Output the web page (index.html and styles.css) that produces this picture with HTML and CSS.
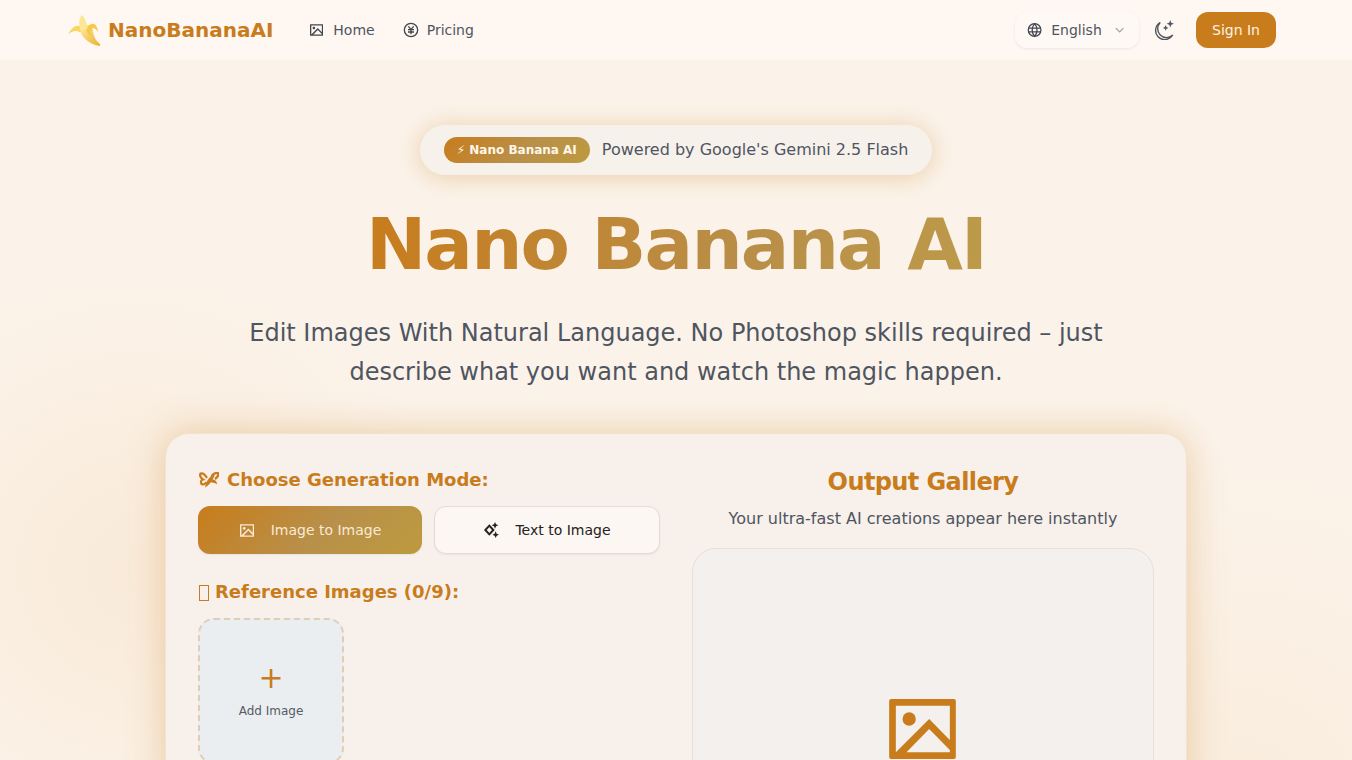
FILE: index.html
```html
<!DOCTYPE html>
<html lang="en">
<head>
    <meta charset="UTF-8">
    <meta name="viewport" content="width=device-width, initial-scale=1.0">
    <title>Nano Banana AI</title>
    <link rel="stylesheet" href="styles.css">
</head>
<body>
    <nav class="navbar">
        <div class="nav-left">
            <a class="logo" href="#">
                <svg class="logo-icon" viewBox="0 0 33 31">
                    <defs>
                        <linearGradient id="bananaBody" x1="0" y1="0" x2="1" y2="1">
                            <stop offset="0" stop-color="#fdeea6"/>
                            <stop offset="1" stop-color="#ecb02c"/>
                        </linearGradient>
                    </defs>
                    <path fill="#f9d65f" d="M13 12C9 9 4 12 0 19.500 4 16 8 14.500 13 17.500z"/>
                    <path fill="url(#bananaBody)" d="M12 13C12 21 20 29 31.500 31 33 30.500 32 29 31 28 26 24 25 18 24.500 12 21 9 15 9 12 13z"/>
                    <path fill="#fbe79a" d="M14 0C11 3 10.500 8 12 13 14 16 17 15 19 13 19 8 17 3 14 0z"/>
                    <path fill="#f6c94a" d="M18.500 15C20 10 23 8 26 9 28.500 10 29.500 13 30 17 28 14 26 12.500 24.500 13 23 14 22.500 17 23 21 20.500 20 19 18 18.500 15z"/>
                </svg>
                <span class="logo-text">NanoBananaAI</span>
            </a>
            <div class="nav-links">
                <a href="#">
                    <svg class="home-icon" viewBox="0 0 66.670 60"><path fill-rule="evenodd" d="M2 0h62.670a2 2 0 0 1 2 2v56a2 2 0 0 1-2 2H2a2 2 0 0 1-2-2V2a2 2 0 0 1 2-2zM6.670 6.670v46.660L40 20l20.670 21V6.670zM17.300 53.330h43.370V51L40 30z"/><circle cx="20" cy="20" r="6.670"/></svg>
                    Home
                </a>
                <a href="#">
                    <svg class="nav-icon price-icon" viewBox="0 0 24 24"><circle cx="12" cy="12" r="10"/><path d="M8 6.500l4 4.500 4-4.500"/><path d="M7.500 11.500h9M7.500 15h9M12 11v7.500"/></svg>
                    Pricing
                </a>
            </div>
        </div>
        <div class="nav-right">
            <button class="lang-select">
                <svg class="nav-icon" viewBox="0 0 24 24"><circle cx="12" cy="12" r="10"/><path d="M2 9h20M2 15h20"/><path d="M12 2a15 15 0 0 1 0 20a15 15 0 0 1 0-20"/></svg>
                <span>English</span>
                <svg class="chevron" viewBox="0 0 24 24"><path d="M6 9l6 6 6-6"/></svg>
            </button>
            <button class="theme-btn">
                <svg viewBox="0 0 24 24">
                    <path d="M22.500 18A11 11 0 1 1 7.500 3a10 10 0 0 0 15 15z"/>
                    <path class="spark" d="M19.500 0l1.200 3.300 3.300 1.200-3.300 1.200-1.200 3.300-1.200-3.300-3.300-1.200 3.300-1.200z"/>
                    <path class="spark" d="M14 6l1 2.500 2.500 1-2.500 1-1 2.500-1-2.500-2.500-1 2.500-1z"/>
                </svg>
            </button>
            <button class="signin-btn">Sign In</button>
        </div>
    </nav>

    <main class="hero">
        <div class="pill">
            <span class="pill-badge">⚡ Nano Banana AI</span>
            <span class="pill-text">Powered by Google's Gemini 2.5 Flash</span>
        </div>
        <h1 class="hero-title">Nano Banana AI</h1>
        <p class="hero-sub">Edit Images With Natural Language. No Photoshop skills required – just describe what you want and watch the magic happen.</p>

        <section class="card">
            <div class="card-left">
                <h3 class="section-label">
                    <svg class="label-icon" viewBox="0 0 20 16">
                        <path class="wing" d="M8 6C6 2.500 3.500 1 1.500 1.500 0.500 3 1.500 6 4 7.500 2 8 1.500 10 2.500 12 4.500 13 6.500 11.500 7.500 10"/>
                        <path class="wing" d="M12.500 4C14.500 1.500 17 0.500 19 1 19.500 3 18.500 5.500 16 7"/>
                        <path d="M15.500 2.500C11 4 7.500 8 6 15.500 9 13.500 10.500 12.500 11.500 10.500 14.500 10.500 16.500 11 18 12.500 18 9 16 7.500 13.500 7.500 14.500 6 15.500 4.500 15.500 2.500z"/>
                    </svg>Choose Generation Mode:
                </h3>
                <div class="mode-row">
                    <button class="mode-btn active">
                        <svg class="small-img" viewBox="0 0 66.670 60"><path fill-rule="evenodd" d="M2 0h62.670a2 2 0 0 1 2 2v56a2 2 0 0 1-2 2H2a2 2 0 0 1-2-2V2a2 2 0 0 1 2-2zM6.670 6.670v46.660L40 20l20.670 21V6.670zM17.300 53.330h43.370V51L40 30z"/><circle cx="20" cy="20" r="6.670"/></svg>
                        Image to Image
                    </button>
                    <button class="mode-btn">
                        <svg viewBox="0 0 24 24"><path d="M9.500 5.500l6 6.500-6 6.500-6-6.500z" fill="none" stroke="currentColor" stroke-width="3"/><path d="M18 0l1.500 3.500L23 5l-3.500 1.500L18 10l-1.500-3.500L13 5l3.500-1.500z"/><path d="M19 14l1.500 3.500L24 19l-3.500 1.500L19 24l-1.500-3.500L14 19l3.500-1.500z"/></svg>
                        Text to Image
                    </button>
                </div>
                <h3 class="section-label ref-label"><span class="tofu"></span>Reference Images (0/9):</h3>
                <div class="add-image">
                    <span class="add-plus">+</span>
                    <span class="add-text">Add Image</span>
                </div>
            </div>
            <div class="card-right">
                <h2 class="gallery-title">Output Gallery</h2>
                <p class="gallery-sub">Your ultra-fast AI creations appear here instantly</p>
                <div class="gallery-box">
                    <svg class="gallery-icon" viewBox="0 0 66.670 60"><path fill-rule="evenodd" d="M2 0h62.670a2 2 0 0 1 2 2v56a2 2 0 0 1-2 2H2a2 2 0 0 1-2-2V2a2 2 0 0 1 2-2zM6.670 6.670v46.660L40 20l20.670 21V6.670zM17.300 53.330h43.370V51L40 30z"/><circle cx="20" cy="20" r="6.670"/></svg>
                </div>
            </div>
        </section>
    </main>
</body>
</html>
```
FILE: styles.css
```css
html {
    overflow: hidden;
}

body {
    margin: 0;
    font-family: "DejaVu Sans", sans-serif;
    color: #4f5560;
    background-color: #fbf3ea;
    background-image:
        radial-gradient(circle at 10% 75%, rgba(240, 190, 130, 0.16), transparent 24%),
        radial-gradient(circle at 92% 105%, rgba(240, 190, 130, 0.12), transparent 25%);
    background-repeat: no-repeat;
    height: 760px;
}

button {
    font-family: inherit;
    cursor: pointer;
}

/* navbar */
.navbar {
    height: 60px;
    box-sizing: border-box;
    padding: 0 76px 0 68px;
    display: flex;
    justify-content: space-between;
    align-items: center;
    background-color: #fff7f2;
}

.nav-left, .nav-right, .nav-links, .nav-links a, .logo {
    display: flex;
    align-items: center;
}

.logo {
    text-decoration: none;
    gap: 7px;
}

.logo-icon {
    width: 33px;
    height: 31px;
}

.logo-text {
    font-size: 20px;
    font-weight: 700;
    color: #c87c1c;
}

.nav-links {
    margin-left: 36px;
    gap: 28px;
}

.nav-links a {
    gap: 8px;
    text-decoration: none;
    color: #4f5560;
    font-size: 14px;
}

.nav-icon {
    width: 16px;
    height: 16px;
    fill: none;
    stroke: #41464f;
    stroke-width: 2;
}

.home-icon {
    width: 13px;
    height: 12px;
    margin: 0 2px 0 1px;
    fill: #41464f;
}

.lang-select {
    height: 36px;
    width: 124px;
    padding: 0 12px;
    display: flex;
    align-items: center;
    gap: 9px;
    border: 0;
    border-radius: 12px;
    background: #fff9f5;
    color: #4f5560;
    font-size: 14px;
    box-shadow: 0 1px 3px rgba(0, 0, 0, 0.08);
}

.chevron {
    width: 16px;
    height: 16px;
    margin-left: 1px;
    fill: none;
    stroke: #9ca3af;
    stroke-width: 2;
}

.theme-btn {
    width: 20px;
    height: 20px;
    margin-left: 15px;
    padding: 0;
    border: 0;
    background: none;
}

.theme-btn svg {
    width: 20px;
    height: 20px;
    fill: none;
    stroke: #4f5560;
    stroke-width: 1.700;
}

.theme-btn .spark {
    fill: #4f5560;
    stroke: none;
}

.signin-btn {
    margin-left: 22px;
    width: 80px;
    height: 36px;
    border: 0;
    border-radius: 12px;
    background: #c87c1c;
    color: #fff3e2;
    font-size: 14px;
}

/* hero */
.hero {
    display: flex;
    flex-direction: column;
    align-items: center;
    padding-top: 65px;
}

.pill {
    height: 50px;
    box-sizing: border-box;
    padding: 0 24px;
    display: flex;
    align-items: center;
    gap: 12px;
    border-radius: 25px;
    background: #f7f1ec;
    color: #4f5560;
    font-size: 16px;
    box-shadow: 0 2px 24px rgba(214, 150, 70, 0.42);
}

.pill-text {
    margin-bottom: 2px;
}

.pill-badge {
    height: 26px;
    padding: 0 13px;
    display: flex;
    align-items: center;
    border-radius: 13px;
    background: linear-gradient(135deg, #c87c1c, #b8904a 55%, #bd9a3e);
    color: #fff6e8;
    font-size: 12px;
    font-weight: 700;
}

.hero-title {
    margin: 26px 0 0;
    font-size: 72px;
    line-height: 86px;
    font-weight: 700;
    letter-spacing: -1.800px;
    background: linear-gradient(100deg, #c87c1c, #b98e48 60%, #bd9a4a);
    -webkit-background-clip: text;
    background-clip: text;
    color: transparent;
}

.hero-sub {
    margin: 27px 0 0;
    width: 880px;
    text-align: center;
    font-size: 24px;
    line-height: 39px;
    color: #4f5560;
}

/* main card */
.card {
    margin-top: 41px;
    width: 1022px;
    height: 560px;
    box-sizing: border-box;
    padding: 32px;
    display: grid;
    grid-template-columns: 462px 462px;
    gap: 32px;
    border: 1px solid #f3e2cf;
    border-radius: 24px;
    background: #f7f0eb;
    box-shadow: 0 0 36px rgba(214, 150, 70, 0.42);
}

.section-label {
    margin: 0;
    font-size: 18px;
    line-height: 28px;
    font-weight: 700;
    color: #c87c1c;
}

.label-icon {
    width: 20px;
    height: 16px;
    margin: 0 8px 0 1px;
    vertical-align: -2px;
    fill: #c87c1c;
}

.label-icon .wing {
    fill: none;
    stroke: #c87c1c;
    stroke-width: 2.200;
}

.tofu {
    display: inline-block;
    box-sizing: border-box;
    width: 10px;
    height: 16px;
    margin: 0 6px 0 1px;
    vertical-align: -3px;
    border: 1px solid #c87c1c;
}

.mode-row {
    margin-top: 12px;
    display: grid;
    grid-template-columns: 224px 226px;
    gap: 12px;
}

.mode-btn {
    height: 48px;
    display: flex;
    align-items: center;
    justify-content: center;
    gap: 16px;
    border: 1px solid #e2dcd8;
    border-radius: 12px;
    background: #fdf7f3;
    color: #222;
    font-size: 14px;
    box-shadow: 0 1px 2px rgba(0, 0, 0, 0.06);
}

.mode-btn svg {
    width: 16px;
    height: 16px;
    fill: currentColor;
}

.mode-btn svg.small-img {
    width: 14px;
    height: 13px;
    margin: 0 1px;
}

.mode-btn.active {
    border: 0;
    color: #f9ead6;
    background: linear-gradient(135deg, #c87c1c, #b8904a 55%, #bd9a3e);
}

.ref-label {
    margin-top: 24px;
}

.add-image {
    margin-top: 12px;
    width: 146px;
    height: 146px;
    box-sizing: border-box;
    padding-bottom: 3px;
    display: flex;
    flex-direction: column;
    align-items: center;
    justify-content: center;
    border: 2px dashed #dfcdb6;
    border-radius: 16px;
    background: #ebeef1;
}

.add-plus {
    font-size: 30px;
    line-height: 36px;
    color: #c87c1c;
}

.add-text {
    margin-top: 7px;
    font-size: 12px;
    line-height: 16px;
    color: #555a64;
}

.card-right {
    display: flex;
    flex-direction: column;
    align-items: center;
}

.gallery-title {
    margin: 0;
    font-size: 24px;
    line-height: 32px;
    font-weight: 700;
    letter-spacing: -0.600px;
    color: #c87c1c;
}

.gallery-sub {
    margin: 9px 0 0;
    font-size: 16px;
    line-height: 24px;
    color: #4f5560;
}

.gallery-box {
    margin-top: 17px;
    width: 100%;
    height: 400px;
    box-sizing: border-box;
    padding-top: 150px;
    display: flex;
    align-items: flex-start;
    justify-content: center;
    border: 1px solid #eadfd3;
    border-radius: 24px;
    background: #f3f0ee;
}

.gallery-icon {
    width: 67px;
    height: 60px;
    margin-right: 1px;
    fill: #c87c1c;
}
```
